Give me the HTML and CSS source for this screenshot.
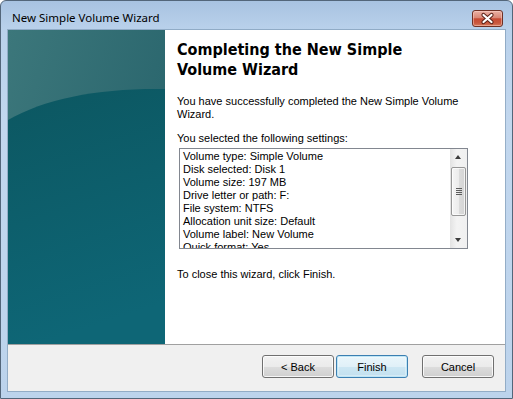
FILE: index.html
```html
<!DOCTYPE html>
<html>
<head>
<meta charset="utf-8">
<link rel="stylesheet" href="styles.css">
</head>
<body>
<div class="window">
  <div class="titlebar">
    <span class="title">New Simple Volume Wizard</span>
    <div class="close">
      <svg width="29" height="15" viewBox="0 0 29 15">
        <path d="M10.5 4 L18.5 11 M18.5 4 L10.5 11" stroke="#5b2219" stroke-width="4.2" stroke-linecap="round" fill="none"/>
        <path d="M10.5 4 L18.5 11 M18.5 4 L10.5 11" stroke="#ffffff" stroke-width="2.2" stroke-linecap="round" fill="none"/>
      </svg>
    </div>
  </div>
  <div class="client">
    <div class="main">
      <div class="side">
        <svg width="157" height="314" viewBox="0 0 157 314">
          <defs>
            <linearGradient id="g-top" x1="0" y1="0" x2="1" y2="0.6">
              <stop offset="0" stop-color="#3c777b"/>
              <stop offset="1" stop-color="#28646c"/>
            </linearGradient>
            <linearGradient id="g-bot" x1="0" y1="0" x2="0.2" y2="1">
              <stop offset="0" stop-color="#0c5761"/>
              <stop offset="1" stop-color="#0e6676"/>
            </linearGradient>
          </defs>
          <rect width="157" height="314" fill="url(#g-top)"/>
          <path d="M0 90 C 38 68, 92 58, 157 59 L157 314 L0 314 Z" fill="url(#g-bot)"/>
        </svg>
      </div>
      <div class="content">
        <h1 class="heading">Completing the New Simple<br>Volume Wizard</h1>
        <p class="text intro">You have successfully completed the New Simple Volume Wizard.</p>
        <p class="text label">You selected the following settings:</p>
        <div class="listbox">
          <div class="items">
            <div class="item">Volume type: Simple Volume</div>
            <div class="item">Disk selected: Disk 1</div>
            <div class="item">Volume size: 197 MB</div>
            <div class="item">Drive letter or path: F:</div>
            <div class="item">File system: NTFS</div>
            <div class="item">Allocation unit size: Default</div>
            <div class="item">Volume label: New Volume</div>
            <div class="item">Quick format: Yes</div>
          </div>
          <div class="scrollbar">
            <div class="arrow up"></div>
            <div class="track">
              <div class="thumb"><span class="grip"></span></div>
            </div>
            <div class="arrow down"></div>
          </div>
        </div>
        <p class="text note">To close this wizard, click Finish.</p>
      </div>
    </div>
    <div class="footer">
      <button class="btn">&lt; Back</button>
      <button class="btn default">Finish</button>
      <button class="btn cancel">Cancel</button>
    </div>
  </div>
</div>
</body>
</html>
```

FILE: styles.css
```css
html, body {
  margin: 0;
  padding: 0;
}
body {
  width: 513px;
  height: 399px;
  overflow: hidden;
  background: #ffffff;
}
.window {
  box-sizing: border-box;
  width: 513px;
  height: 399px;
  border: 1px solid #53667a;
  border-radius: 6px 6px 0 0;
  background: linear-gradient(#a8c3e1, #b9d1eb 28px, #c2d7ee 120px, #bcd3ec);
  display: flex;
  flex-direction: column;
}
.titlebar {
  height: 29px;
  display: flex;
  align-items: flex-start;
  padding: 0 9px 0 11px;
  box-sizing: border-box;
}
.title {
  margin-top: 8px;
  font-family: "Noto Sans", sans-serif;
  font-size: 11.5px;
  line-height: 17px;
  color: #000;
}
.close {
  margin-left: auto;
  margin-top: 9px;
  box-sizing: border-box;
  width: 31px;
  height: 17px;
  border: 1px solid #6e3025;
  border-radius: 3px;
  background: linear-gradient(#eab1a5, #d98776 45%, #c64a33 52%, #c9573e 80%, #d67a5c);
  box-shadow: inset 0 0 0 1px rgba(255, 220, 210, 0.45);
  display: flex;
  align-items: center;
  justify-content: center;
}
.close svg {
  display: block;
}
.client {
  margin: 0 7px;
  height: 361px;
  display: flex;
  flex-direction: column;
  box-shadow: 0 0 0 1px rgba(70, 100, 130, 0.35);
}
.main {
  height: 314px;
  display: flex;
}
.side {
  width: 157px;
  height: 314px;
}
.side svg {
  display: block;
}
.content {
  flex: 1;
  background: #ffffff;
  padding: 10px 12px 0 12px;
}
.heading {
  margin: 0;
  font-family: "DejaVu Sans Condensed", "DejaVu Sans", Verdana, sans-serif;
  font-weight: bold;
  font-size: 16px;
  line-height: 20px;
  color: #000;
}
.text {
  margin: 0;
  font-family: "Liberation Sans", Arial, sans-serif;
  font-size: 11px;
  line-height: 13px;
  color: #000;
}
.intro {
  margin-top: 15px;
  width: 292px;
}
.label {
  margin-top: 11px;
}
.listbox {
  margin: 3px 0 0 2px;
  box-sizing: border-box;
  width: 289px;
  height: 101px;
  border: 1px solid #828790;
  display: flex;
  background: #fff;
}
.items {
  flex: 1;
  overflow: hidden;
  padding: 1px 0 0 3px;
  font-family: "Liberation Sans", Arial, sans-serif;
  font-size: 11px;
  line-height: 13px;
  color: #000;
}
.item {
  white-space: nowrap;
}
.scrollbar {
  width: 17px;
  display: flex;
  flex-direction: column;
  background: linear-gradient(to right, #e3e3e3, #f3f3f3 40%, #f0f0f0);
}
.arrow {
  height: 17px;
  position: relative;
}
.arrow::before {
  content: "";
  position: absolute;
  left: 5px;
  width: 0;
  height: 0;
  border-left: 3.5px solid transparent;
  border-right: 3.5px solid transparent;
}
.arrow.up::before {
  top: 6px;
  border-bottom: 4px solid #3c3c3c;
}
.arrow.down::before {
  top: 7px;
  border-top: 4px solid #3c3c3c;
}
.track {
  flex: 1;
  padding-top: 1px;
}
.thumb {
  box-sizing: border-box;
  margin-left: 1px;
  width: 15px;
  height: 49px;
  border: 1px solid #979797;
  border-radius: 2px;
  background: linear-gradient(to right, #f5f5f5, #ececec 50%, #dcdcdc 51%, #d4d4d4);
  box-shadow: inset 0 0 0 1px rgba(255, 255, 255, 0.7);
  display: flex;
  align-items: center;
  justify-content: center;
}
.grip {
  display: block;
  width: 6px;
  height: 7px;
  background: repeating-linear-gradient(#5c5c5c 0 1px, transparent 1px 2px);
}
.note {
  margin-top: 19px;
}
.footer {
  box-sizing: border-box;
  height: 47px;
  border-top: 1px solid #a0a0a0;
  background: #f0f0f0;
  display: flex;
  justify-content: flex-end;
  align-items: flex-start;
  padding: 10px 11px 0 0;
}
.btn {
  box-sizing: border-box;
  width: 72px;
  height: 23px;
  margin: 0 0 0 2px;
  padding: 0;
  border: 1px solid #707070;
  border-radius: 3px;
  background: linear-gradient(#f2f2f2, #ebebeb 50%, #dddddd 51%, #cfcfcf);
  box-shadow: inset 0 0 0 1px rgba(255, 255, 255, 0.8);
  font-family: "Liberation Sans", Arial, sans-serif;
  font-size: 11px;
  color: #000;
}
.btn.default {
  border-color: #3c7fb1;
  box-shadow: inset 0 0 0 1px #bfe6f6, inset 0 0 0 2px rgba(255, 255, 255, 0.3);
  background: linear-gradient(#eaf6fb, #e0f0f8 50%, #cde7f3 51%, #c2e0ef);
}
.btn.cancel {
  margin-left: 14px;
}
```
